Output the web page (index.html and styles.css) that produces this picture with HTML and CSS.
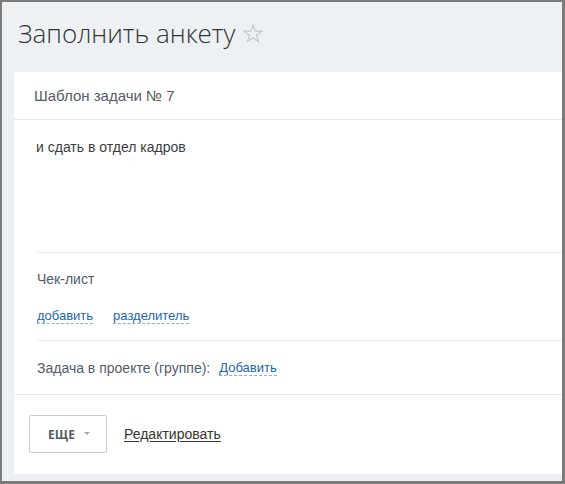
FILE: index.html
```html
<!DOCTYPE html>
<html lang="ru">
<head>
<meta charset="utf-8">
<title>Заполнить анкету</title>
<link rel="stylesheet" href="styles.css">
</head>
<body>
<div class="frame">
  <header class="page-head">
    <h1 class="title">Заполнить анкету</h1>
    <svg class="star" width="20" height="19" viewBox="0 0 20 19"><polygon points="10,1 12.2,7.2 18.8,7.2 13.5,11.2 15.5,17.6 10,13.7 4.5,17.6 6.5,11.2 1.2,7.2 7.8,7.2" fill="none" stroke="#c3c9cf" stroke-width="1.2" stroke-linejoin="miter"/></svg>
  </header>
  <main class="card">
    <div class="card-head">Шаблон задачи № 7</div>
    <div class="desc">и сдать в отдел кадров</div>
    <div class="body">
      <section class="checklist">
        <div class="checklist-title">Чек-лист</div>
        <div class="links">
          <span class="dash-link">добавить</span>
          <span class="dash-link">разделитель</span>
        </div>
      </section>
      <section class="project">
        <span class="project-label">Задача в проекте (группе):</span>
        <span class="dash-link">Добавить</span>
      </section>
    </div>
    <footer class="footer">
      <button class="more-btn"><span>ЕЩЕ</span><i class="caret"></i></button>
      <span class="edit-link">Редактировать</span>
    </footer>
  </main>
</div>
</body>
</html>
```
FILE: styles.css
```css
html, body {
  margin: 0;
  padding: 0;
}
body {
  width: 565px;
  height: 484px;
  overflow: hidden;
  font-family: "Liberation Sans", Arial, sans-serif;
}
.frame {
  box-sizing: border-box;
  width: 565px;
  height: 484px;
  border-style: solid;
  border-color: #7b7b7b;
  border-width: 2px 3px 3px 2px;
  background: #eef1f4;
  padding: 0 0 7px 12px;
  display: flex;
  flex-direction: column;
}
.page-head {
  height: 70px;
  display: flex;
  align-items: center;
  padding-left: 4px;
  padding-bottom: 8px;
  box-sizing: border-box;
}
.title {
  margin: 0;
  font-family: "Open Sans", sans-serif;
  font-weight: 300;
  font-size: 26px;
  color: #333;
}
.star {
  margin-left: 8px;
  margin-top: 1px;
}
.card {
  flex: 1;
  background: #fff;
  display: flex;
  flex-direction: column;
}
.card-head {
  height: 47px;
  line-height: 47px;
  padding-left: 20px;
  font-size: 15px;
  color: #545c66;
  border-bottom: 1px solid #e9ebed;
}
.desc {
  height: 132px;
  box-sizing: border-box;
  padding: 19px 0 0 22px;
  font-size: 14px;
  line-height: 17px;
  color: #3a3d42;
}
.body {
  margin-left: 23px;
}
.checklist {
  border-top: 1px solid #e9ebed;
  padding: 18px 0 16px 0;
}
.checklist-title {
  font-size: 14px;
  line-height: 17px;
  color: #535c69;
}
.links {
  margin-top: 20px;
  line-height: 17px;
  display: flex;
  gap: 20px;
}
.dash-link {
  font-size: 13px;
  color: #2067b0;
  border-bottom: 1px dashed #8fb0d4;
  line-height: 15px;
}
.project {
  border-top: 1px solid #e9ebed;
  height: 53px;
  display: flex;
  align-items: center;
  gap: 9px;
}
.project-label {
  font-size: 14px;
  color: #535c69;
}
.footer {
  border-top: 1px solid #e9ebed;
  padding: 20px 0 0 15px;
  display: flex;
  align-items: center;
  gap: 17px;
}
.more-btn {
  width: 78px;
  height: 38px;
  box-sizing: border-box;
  border: 1px solid #c6cdd3;
  border-radius: 2px;
  background: #fff;
  display: flex;
  align-items: center;
  justify-content: center;
  gap: 9px;
  padding: 0 0 0 2px;
  font-family: "Open Sans", sans-serif;
  font-weight: 700;
  font-size: 12px;
  color: #535c69;
}
.caret {
  width: 0;
  height: 0;
  border-left: 3px solid transparent;
  border-right: 3px solid transparent;
  border-top: 3px solid #a0a6ab;
  margin-top: -1px;
}
.edit-link {
  font-size: 14px;
  color: #333;
  text-decoration: underline;
  text-underline-offset: 2px;
}
```
